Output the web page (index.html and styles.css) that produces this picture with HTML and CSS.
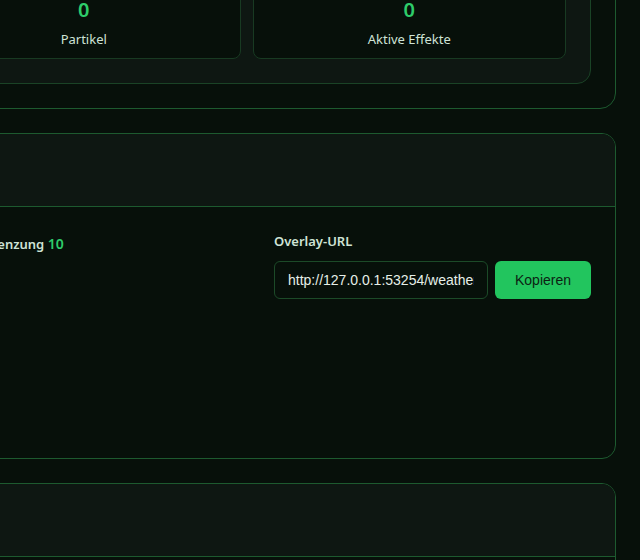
FILE: index.html
```html
<!DOCTYPE html>
<html lang="de">
<head>
<meta charset="utf-8">
<title>Wetter-Overlay</title>
<link rel="stylesheet" href="styles.css">
</head>
<body>
<main class="page">
  <section class="panel">
    <div class="stats">
      <div class="stat-grid">
        <div class="tile">
          <div class="tile-value">0</div>
          <div class="tile-label">Partikel</div>
        </div>
        <div class="tile">
          <div class="tile-value">0</div>
          <div class="tile-label">Aktive Effekte</div>
        </div>
      </div>
    </div>
  </section>

  <section class="card">
    <header class="card-head"></header>
    <div class="card-body">
      <div class="col">
        <label class="field-label limit">Max. Partikelbegrenzung <span class="val">10</span></label>
      </div>
      <div class="col">
        <label class="field-label">Overlay-URL</label>
        <div class="url-row">
          <input class="url-input" type="text" value="http://127.0.0.1:53254/weather-overlay" readonly>
          <button class="btn" type="button">Kopieren</button>
        </div>
      </div>
    </div>
  </section>

  <section class="card">
    <header class="card-head"></header>
    <div class="card-body short"></div>
  </section>
</main>
</body>
</html>
```

FILE: styles.css
```css
* { box-sizing: border-box; }
html, body { margin: 0; padding: 0; }
body {
  background: #07100a;
  color: #cfe3d6;
  font-family: "Segoe UI", "Noto Sans", "Open Sans", sans-serif;
  overflow: hidden;
}
.page {
  margin: -65px 0 0 -123px;
  padding-right: 24px;
  display: flex;
  flex-direction: column;
  gap: 24px;
}
.panel {
  border: 1px solid #1d5a2f;
  border-radius: 16px;
  padding: 24px;
  background: #07100a;
}
.stats {
  border: 1px solid #1a4326;
  border-radius: 14px;
  padding: 24px;
  background: #0e1712;
}
.stat-grid {
  display: grid;
  grid-template-columns: 1fr 1fr;
  gap: 12px;
}
.tile {
  border: 1px solid #183a22;
  border-radius: 8px;
  background: #07100a;
  padding: 10px 12px 10px;
  text-align: center;
}
.tile-value {
  font-size: 20px;
  line-height: 28px;
  font-weight: 600;
  color: #2ecc6a;
}
.tile-label {
  margin-top: 6px;
  font-size: 13px;
  line-height: 18px;
  color: #cfe3d6;
}
.card {
  border: 1px solid #1d5a2f;
  border-radius: 14px;
  background: #07100a;
  overflow: hidden;
}
.card-head {
  background: #0e1712;
  border-bottom: 1px solid #1d5a2f;
  height: 73px;
  padding: 0 24px;
}
.card-body {
  padding: 24px;
  min-height: 251px;
  display: grid;
  grid-template-columns: 1fr 317px;
  gap: 24px;
  align-items: start;
}
.card-body.short { min-height: 200px; }
.field-label {
  display: block;
  font-size: 13px;
  line-height: 20px;
  font-weight: 600;
  color: #cfe3d6;
  margin-bottom: 10px;
}
.field-label.limit {
  padding-top: 3px;
  text-indent: -17px;
}
.val { color: #2ecc6a; font-size: 14px; }
.url-row {
  display: flex;
  gap: 7px;
}
.url-input {
  width: 214px;
  height: 38px;
  background: #07100a;
  border: 1px solid #1c4a28;
  border-radius: 6px;
  padding: 0 13px;
  font-family: "Liberation Sans", Arial, sans-serif;
  font-size: 14px;
  color: #e6efe8;
  outline: none;
}
.btn {
  width: 96px;
  height: 38px;
  border: none;
  border-radius: 6px;
  background: #22c55e;
  color: #0c1f13;
  font-family: "Liberation Sans", Arial, sans-serif;
  font-size: 14px;
  cursor: pointer;
}
```
